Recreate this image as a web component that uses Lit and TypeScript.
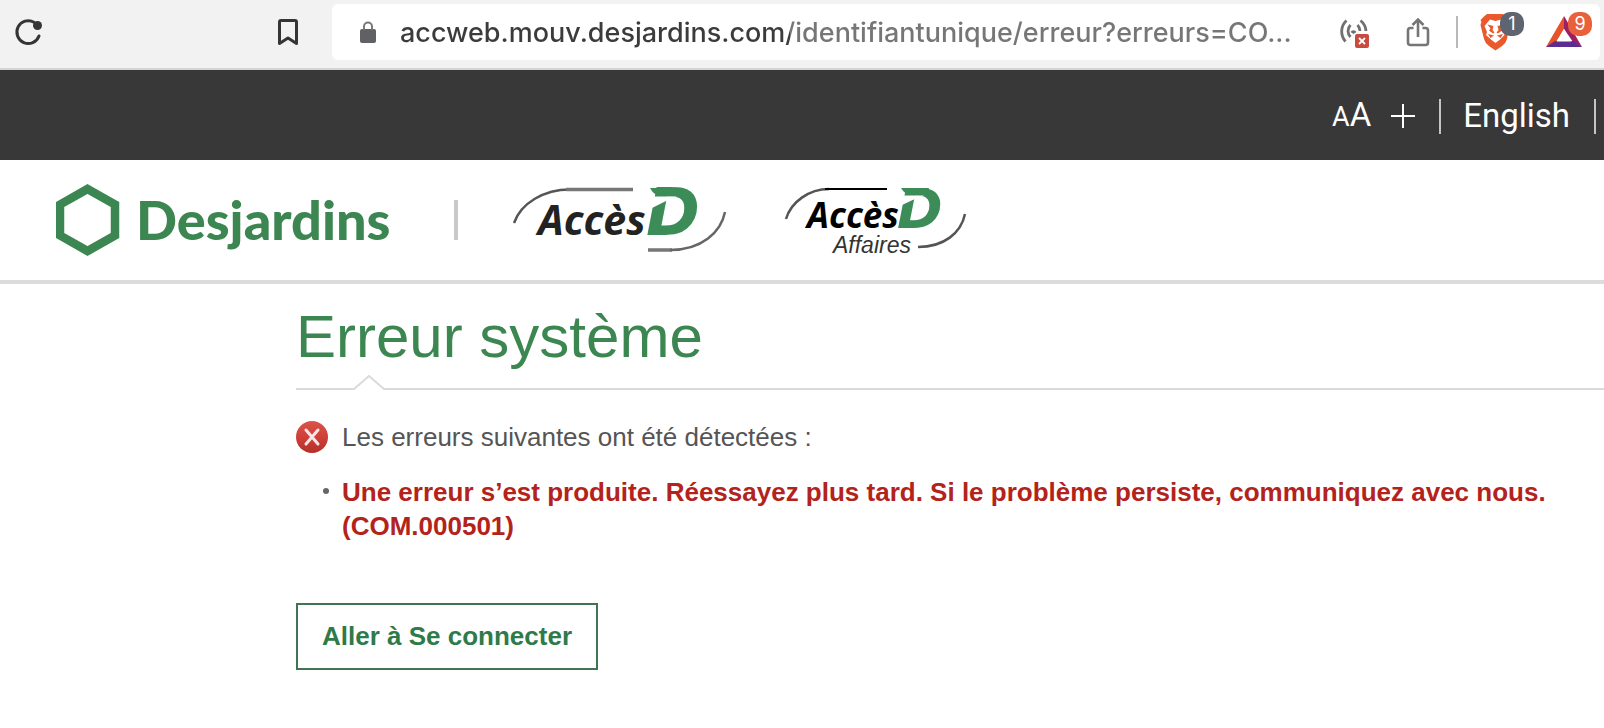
import { LitElement, html, css } from "lit";
import { customElement, property } from "lit/decorators.js";

@customElement("browser-bar")
class BrowserBar extends LitElement {
  @property() url = "";

  static styles = css`
    :host { display: block; }
    .bar {
      display: flex;
      align-items: center;
      gap: 32px;
      box-sizing: border-box;
      padding: 4px 4px 8px 12px;
      background: #f2f2f2;
      border-bottom: 2px solid #d4d4d4;
    }
    .tools {
      flex: none;
      display: flex;
      justify-content: space-between;
      width: 288px;
    }
    button {
      display: flex;
      padding: 0;
      border: 0;
      background: none;
      cursor: pointer;
    }
    svg { display: block; }
    .address {
      flex: 1;
      min-width: 0;
      display: flex;
      align-items: center;
      height: 56px;
      box-sizing: border-box;
      padding: 0 8px 0 24px;
      border-radius: 6px;
      background: #fff;
    }
    .url {
      flex: 1;
      min-width: 0;
      height: 40px;
      margin: 0 24px 0 20px;
      padding: 0;
      border: 0;
      outline: 0;
      font: 500 27px Inter, "Noto Sans", sans-serif;
      color: #767676;
      -webkit-text-fill-color: transparent;
      background: linear-gradient(90deg, #3b3b3b 390px, #767676 390px);
      -webkit-background-clip: text;
      background-clip: text;
      text-overflow: ellipsis;
    }
    .share { margin-left: 32px; }
    .rule { width: 2px; height: 32px; margin: 0 22px; background: #b9b9b9; }
    .ext { position: relative; }
    .ext + .ext { margin-left: 20px; }
    .badge {
      position: absolute;
      top: 0;
      right: 0;
      box-sizing: border-box;
      width: 24px;
      height: 24px;
      border-radius: 10px;
      background: #5f6570;
      color: #fff;
      font: 18px/24px Inter, sans-serif;
      text-align: center;
    }
    .hot { background: #e8603c; }
  `;

  render() {
    return html`
      <div class="bar">
        <div class="tools">
          <button aria-label="Actualiser">
            <svg width="32" height="32" viewBox="0 0 32 32">
              <path d="M22 6.2A11.4 11.4 0 1 0 27 20" fill="none" stroke="#353535" stroke-width="3" stroke-linecap="round" />
              <circle cx="25.5" cy="9.5" r="4.5" fill="#353535" />
            </svg>
          </button>
          <button aria-label="Ajouter aux favoris">
            <svg width="24" height="32" viewBox="0 0 24 32">
              <path d="M5 4.500H19Q20.500 4.500 20.500 6V27.500L12 22 3.500 27.500V6Q3.500 4.500 5 4.500Z" fill="none" stroke="#353535" stroke-width="3" stroke-linejoin="round" />
            </svg>
          </button>
        </div>
        <div class="address">
          <svg width="24" height="32" viewBox="0 0 24 32" aria-hidden="true">
            <rect x="4" y="13" width="16" height="14" rx="2" fill="#5f6165" />
            <path d="M8 14V10.500A4 4 0 0 1 16 10.500V14" fill="none" stroke="#77797c" stroke-width="2" />
          </svg>
          <input class="url" type="text" aria-label="Adresse" .value=${this.url} />
          <button aria-label="Lecture bloquée">
            <svg width="32" height="32" viewBox="0 0 32 32">
              <g fill="none" stroke="#707070" stroke-width="2.800">
                <path d="M8.500 4.500A15 15 0 0 0 7.500 25.500M12.500 9A8.500 8.500 0 0 0 12.500 21M22.500 4.500A15 15 0 0 1 28 15M19.500 9A9 9 0 0 1 22 15" />
              </g>
              <path d="M12.500 16A3.500 3.500 0 0 1 18.500 16L15.500 18Z" fill="#707070" />
              <rect x="17" y="18" width="14" height="14" rx="2" fill="#c94a3f" />
              <path d="M21 22l6 6M27 22l-6 6" stroke="#fff" stroke-width="1.800" />
            </svg>
          </button>
          <button class="share" aria-label="Partager">
            <svg width="32" height="32" viewBox="0 0 32 32" fill="none" stroke="#757575" stroke-width="2.600">
              <path d="M11.500 12H8.500Q6 12 6 14.500V26.500Q6 29 8.500 29H23.500Q26 29 26 26.500V14.500Q26 12 23.500 12H20.500M16 21V4M10.500 9L16 3.500 21.500 9" />
            </svg>
          </button>
          <span class="rule"></span>
          <button class="ext" aria-label="Brave Shields">
            <svg width="44" height="40" viewBox="0 0 44 40">
              <path d="M7 2H23L26 5.500 29 6V14L27 27Q26 31 22 34L15.500 38.500 9 34Q5 31 4 27L.5 13 1.500 10 .5 8 4 4.500Z" fill="#e9592b" />
              <path d="M10 7.500L15.500 9 21 7.500 26 14 23.500 20 24.500 23 20 27.500 15.500 31 11 27.500 6 23 7 20 4.500 14Z" fill="#fff" />
              <path d="M7.500 12.500L13.500 14 12.500 18 14.500 20.500 13 21.500 9 18.500 10.500 16.500ZM23.500 12.500L17.500 14 18.500 18 16.500 20.500 18 21.500 22 18.500 20.500 16.500ZM8 22L14 23.500 10.500 26ZM23 22L17 23.500 20.500 26Z" fill="#e9592b" />
            </svg>
            <span class="badge">1</span>
          </button>
          <button class="ext" aria-label="Brave Rewards">
            <svg width="48" height="40" viewBox="0 0 48 40">
              <path d="M20 4L20 17 11 32 2 35Z" fill="#e6532b" />
              <path d="M20 4L38 35 29 30 20 17Z" fill="#9c1f63" />
              <path d="M2 35L11 29H29L38 35Z" fill="#5b2d91" />
              <path d="M20 17L27.500 29.500H12.500Z" fill="#fff" />
            </svg>
            <span class="badge hot">9</span>
          </button>
        </div>
      </div>
    `;
  }
}

@customElement("site-header")
class SiteHeader extends LitElement {
  static styles = css`
    :host { display: block; }
    a { color: inherit; text-decoration: none; }
    svg { display: block; }
    .utility {
      display: flex;
      justify-content: flex-end;
      align-items: center;
      box-sizing: border-box;
      height: 90px;
      padding: 2px 8px 0 0;
      background: #383838;
      color: #fff;
      font: 33px/40px Roboto, sans-serif;
    }
    .size {
      display: flex;
      align-items: center;
      gap: 20px;
      margin-right: 24px;
      padding: 0;
      border: 0;
      background: none;
      color: inherit;
      font: inherit;
      cursor: pointer;
    }
    .small { font-size: 27px; }
    .split { width: 2px; height: 35px; background: #c4c4c4; }
    .language { margin: 0 24px 0 22px; }
    .brands {
      display: flex;
      align-items: center;
      height: 120px;
      padding-left: 56px;
      border-bottom: 4px solid #dcdcdc;
      background: #fff;
    }
    .home {
      display: flex;
      align-items: center;
      gap: 16px;
      color: #3c8651;
      font: 900 54px/72px Lato, sans-serif;
    }
    .divider { width: 4px; height: 40px; margin: 0 54px 0 64px; background: #c8c8c8; }
    .affaires { margin-left: 56px; }
    .acces { font-family: "Open Sans", sans-serif; font-weight: 700; font-style: italic; }
    .initial { font-family: "DejaVu Sans", sans-serif; font-weight: 700; font-style: italic; }
    .sub { font-family: "Liberation Sans", sans-serif; font-style: italic; }
  `;

  render() {
    return html`
      <header>
        <nav class="utility">
          <button class="size" aria-label="Agrandir le texte">
            <span><span class="small">A</span>A</span>
            <svg width="24" height="24" viewBox="0 0 24 24"><path d="M12 0V24M0 12H24" stroke="#fff" stroke-width="2" /></svg>
          </button>
          <span class="split"></span>
          <a class="language" href="#" lang="en">English</a>
          <span class="split"></span>
        </nav>
        <div class="brands">
          <a class="home" href="#">
            <svg width="64" height="72" viewBox="0 0 64 72" aria-hidden="true">
              <path d="M31.500 5L59 20.500V51.500L31.500 67 4 51.500V20.500Z" fill="none" stroke="#3c8651" stroke-width="8.500" />
            </svg>
            <span>Desjardins</span>
          </a>
          <span class="divider"></span>
          <a href="#">
            <svg width="216" height="100" viewBox="0 -16 216 100">
              <path d="M2 37C9 17 32 3.500 58 3.500" fill="none" stroke="#555" stroke-width="2.500" />
              <path d="M54 3.500H121M136 64H160" stroke="#777" stroke-width="3.500" />
              <path d="M158 64C190 64 209 46 213 26" fill="none" stroke="#666" stroke-width="2.500" />
              <text class="acces" x="26" y="49" font-size="41" fill="#222">Accès</text>
              <text class="initial" x="134" y="49" font-size="65" fill="#3c8c58">D</text>
              <path d="M138 2H170L168 10.500H151Q142 10 138 2Z" fill="#3c8c58" />
              <path d="M140 10.500L165 10.500 157 13.500 140 22Z" fill="#fff" />
            </svg>
          </a>
          <a class="affaires" href="#">
            <svg width="184" height="100" viewBox="0 -16 184 100">
              <path d="M2 33C7 16 25 3 45 3" fill="none" stroke="#555" stroke-width="2.500" />
              <path d="M41 3H103" stroke="#000" stroke-width="2" />
              <path d="M134 61C160 61 177 47 181 28" fill="none" stroke="#555" stroke-width="2.500" />
              <text class="acces" x="23" y="42" font-size="35" fill="#000">Accès</text>
              <text class="sub" x="49" y="67" font-size="23" fill="#333">Affaires</text>
              <text class="initial" x="113" y="42" font-size="55" fill="#3c8c58">D</text>
              <path d="M117 2H145L143 9.500H128Q121 9 117 2Z" fill="#3c8c58" />
              <path d="M118 9.500L140 9.500 133 12 118 19Z" fill="#fff" />
            </svg>
          </a>
        </div>
      </header>
    `;
  }
}

@customElement("error-panel")
class ErrorPanel extends LitElement {
  @property({ attribute: false }) errors: string[] = [];

  static styles = css`
    :host { display: block; }
    .panel {
      padding: 20px 0 56px 296px;
      font: 26px/34px "Liberation Sans", Arial, sans-serif;
      color: #555;
    }
    h1 {
      margin: 0;
      color: #3c8651;
      font-size: 60px;
      font-weight: 400;
      line-height: 66px;
    }
    .underline { display: flex; align-items: flex-end; height: 20px; }
    .underline::before, .underline::after { content: ""; height: 2px; background: #dadada; }
    .underline::before { width: 56px; }
    .underline::after { flex: 1; }
    svg { display: block; flex: none; }
    .intro { display: flex; align-items: center; gap: 14px; margin: 30px 0 0; }
    ul {
      margin: 21px 48px 0 0;
      padding: 0;
      list-style: none;
    }
    li {
      display: flex;
      gap: 13px;
      padding-left: 27px;
      color: #b3231c;
      font-weight: 700;
    }
    li::before {
      content: "";
      flex: none;
      width: 6px;
      height: 6px;
      margin-top: 13px;
      border-radius: 50%;
      background: #666;
    }
    .connect {
      margin-top: 60px;
      padding: 14px 24px;
      border: 2px solid #3f7553;
      background: #fff;
      color: #2f7a49;
      font: 700 26px/35px "Liberation Sans", Arial, sans-serif;
      cursor: pointer;
    }
  `;

  render() {
    return html`
      <main class="panel">
        <h1>Erreur système</h1>
        <div class="underline">
          <svg width="34" height="16" viewBox="0 0 34 16"><path d="M0 15H2L17 2 32 15H34" fill="none" stroke="#dadada" stroke-width="2" /></svg>
        </div>
        <p class="intro">
          <svg width="32" height="32" viewBox="0 0 32 32" aria-hidden="true">
            <defs>
              <linearGradient id="red" x1="0" y1="0" x2="0" y2="1">
                <stop offset="0" stop-color="#d9544a" />
                <stop offset="0.500" stop-color="#cf3f38" />
                <stop offset="1" stop-color="#b5302a" />
              </linearGradient>
            </defs>
            <circle cx="16" cy="16" r="16" fill="url(#red)" />
            <path d="M10 9L22 23M22 9L10 23" stroke="#f8e6e6" stroke-width="3" stroke-linecap="round" />
          </svg>
          <span>Les erreurs suivantes ont été détectées :</span>
        </p>
        <ul>
          ${this.errors.map((message) => html`<li><span>${message}</span></li>`)}
        </ul>
        <button class="connect">Aller à Se connecter</button>
      </main>
    `;
  }
}

@customElement("app-root")
class AppRoot extends LitElement {
  static styles = css`
    :host { display: block; min-height: 100vh; background: #fff; }
  `;

  render() {
    return html`
      <browser-bar .url=${"accweb.mouv.desjardins.com/identifiantunique/erreur?erreurs=CO..."}></browser-bar>
      <site-header></site-header>
      <error-panel
        .errors=${["Une erreur s’est produite. Réessayez plus tard. Si le problème persiste, communiquez avec nous. (COM.000501)"]}
      ></error-panel>
    `;
  }
}
